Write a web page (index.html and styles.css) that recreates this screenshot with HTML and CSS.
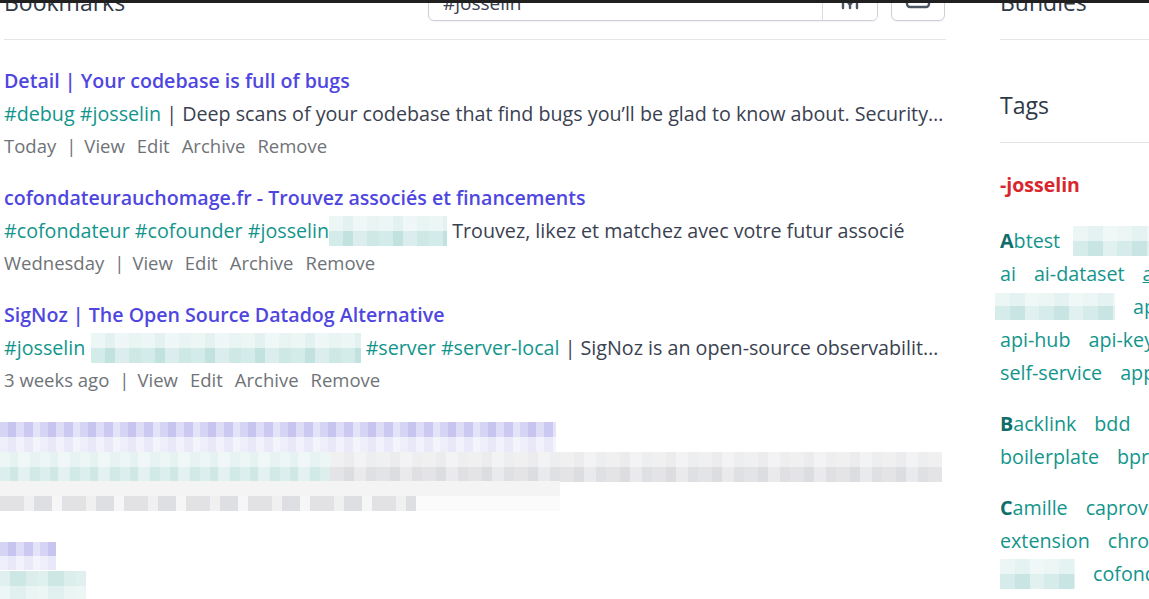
FILE: index.html
```html
<!DOCTYPE html>
<html lang="en">
<head>
<meta charset="utf-8">
<title>Bookmarks</title>
<link rel="stylesheet" href="styles.css">
</head>
<body>
<div class="topbar"></div>
<div class="page">
  <main class="main">
    <header class="section-header">
      <h2>Bookmarks</h2>
      <div class="header-tools">
        <form class="search">
          <input class="search-input" type="text" value="#josselin">
          <button class="search-btn" type="button" aria-label="Search options">
            <svg width="20" height="20" viewBox="0 0 20 20" fill="none" stroke="#4b5563" stroke-width="2.4" stroke-linecap="round" stroke-linejoin="round"><path d="M3 2v14M17 2v14M5 6l5 7l5-7M10 13v3"/></svg>
          </button>
        </form>
        <button class="icon-btn" type="button" aria-label="Bulk edit">
          <svg width="28" height="20" viewBox="0 0 28 20" fill="none" stroke="#4b5563" stroke-width="2.4"><rect x="3" y="-8" width="22" height="13" rx="3"/></svg>
        </button>
      </div>
    </header>

    <ul class="bookmark-list">
      <li class="bookmark">
        <div class="title"><a href="#">Detail | Your codebase is full of bugs</a></div>
        <div class="desc"><span class="tag">#debug</span> <span class="tag">#josselin</span> | Deep scans of your codebase that find bugs you’ll be glad to know about. Security issues, logic errors and edge cases, found before your users do.</div>
        <div class="actions"><span>Today</span><span class="sep">|</span><a href="#">View</a><a href="#">Edit</a><a href="#">Archive</a><a href="#">Remove</a></div>
      </li>
      <li class="bookmark">
        <div class="title"><a href="#">cofondateurauchomage.fr - Trouvez associés et financements</a></div>
        <div class="desc"><span class="tag">#cofondateur</span> <span class="tag">#cofounder</span> <span class="tag">#josselin</span><span class="blur blur-tag w118"></span> Trouvez, likez et matchez avec votre futur associé</div>
        <div class="actions"><span>Wednesday</span><span class="sep">|</span><a href="#">View</a><a href="#">Edit</a><a href="#">Archive</a><a href="#">Remove</a></div>
      </li>
      <li class="bookmark">
        <div class="title"><a href="#">SigNoz | The Open Source Datadog Alternative</a></div>
        <div class="desc"><span class="tag">#josselin</span> <span class="blur blur-tag w270"></span> <span class="tag">#server</span> <span class="tag">#server-local</span> | SigNoz is an open-source observability platform native to OpenTelemetry with logs, traces and metrics.</div>
        <div class="actions"><span>3 weeks ago</span><span class="sep">|</span><a href="#">View</a><a href="#">Edit</a><a href="#">Archive</a><a href="#">Remove</a></div>
      </li>
      <li class="bookmark blurred">
        <div class="title"><span class="blur blur-title w556"></span></div>
        <div class="desc"><span class="blur blur-desc-a"></span><span class="blur blur-desc-b"></span></div>
        <div class="actions"><span class="blur blur-actions"></span></div>
      </li>
      <li class="bookmark blurred">
        <div class="title"><span class="blur blur-title w56"></span></div>
        <div class="desc"><span class="blur blur-tag2"></span></div>
      </li>
    </ul>
  </main>

  <aside class="side">
    <section class="side-section">
      <header class="section-header"><h2>Bundles</h2></header>
    </section>
    <section class="side-section tags-section">
      <header class="section-header"><h2>Tags</h2></header>
      <div class="selected-tags"><a href="#" class="selected-tag">-josselin</a></div>
      <div class="tag-group first">
        <div class="tag-line"><a href="#"><b>A</b>btest</a><span class="blur blur-side w80"></span></div>
        <div class="tag-line"><a href="#">ai</a><a href="#">ai-dataset</a><a href="#" class="hover">analytics</a></div>
        <div class="tag-line"><span class="blur blur-side w120"></span><a href="#">api</a></div>
        <div class="tag-line"><a href="#">api-hub</a><a href="#">api-key</a></div>
        <div class="tag-line"><a href="#">self-service</a><a href="#">app</a></div>
      </div>
      <div class="tag-group">
        <div class="tag-line"><a href="#"><b>B</b>acklink</a><a href="#">bdd</a></div>
        <div class="tag-line"><a href="#">boilerplate</a><a href="#">bpr</a></div>
      </div>
      <div class="tag-group">
        <div class="tag-line"><a href="#"><b>C</b>amille</a><a href="#">caprover</a></div>
        <div class="tag-line"><a href="#">extension</a><a href="#">chrome</a></div>
        <div class="tag-line"><span class="blur blur-side w75"></span><a href="#">cofondateur</a></div>
      </div>
    </section>
  </aside>
</div>
</body>
</html>
```

FILE: styles.css
```css
* { box-sizing: border-box; }

html, body { height: 100%; }

body {
  margin: 0;
  background: #ffffff;
  color: #3a4150;
  font-family: "Open Sans", "Noto Sans", "Liberation Sans", sans-serif;
  font-size: 19.7px;
  overflow: hidden;
}

a { text-decoration: none; color: inherit; }

.topbar {
  position: fixed;
  top: 0;
  left: 0;
  right: 0;
  height: 3px;
  background: #202020;
  z-index: 10;
}

.page {
  display: flex;
  gap: 54px;
  margin-top: -33px;
  padding-left: 4px;
}

.main { width: 942px; flex: none; }
.side { width: 320px; flex: none; }

.section-header {
  height: 73px;
  display: flex;
  align-items: center;
  justify-content: space-between;
  border-bottom: 1px solid #e3e5e9;
}

.section-header h2 {
  margin: 0;
  font-size: 23px;
  font-weight: 500;
  color: #2f3846;
  line-height: 1.2;
}

.header-tools {
  display: flex;
  gap: 13px;
  align-items: center;
  margin-right: 1px;
}

.search {
  display: flex;
  width: 450px;
  height: 36px;
  margin: 0;
  border: 1px solid #cdd0d8;
  border-radius: 6px;
  box-shadow: 0 1px 1px rgba(0, 0, 0, 0.05);
  overflow: hidden;
}

.search-input {
  flex: 1;
  border: 0;
  outline: 0;
  padding: 0 14px;
  font: inherit;
  font-size: 19px;
  color: #3a4150;
  background: transparent;
}

.search-btn {
  width: 55px;
  border: 0;
  border-left: 1px solid #d8dbe1;
  background: #fff;
  display: flex;
  align-items: flex-start;
  justify-content: center;
  padding: 6px 0 0;
}

.icon-btn {
  width: 54px;
  height: 36px;
  border: 1px solid #cdd0d8;
  border-radius: 6px;
  background: #fff;
  box-shadow: 0 1px 1px rgba(0, 0, 0, 0.05);
  display: flex;
  align-items: flex-start;
  justify-content: center;
  padding: 16px 0 0;
}

/* Bookmark list */
.bookmark-list {
  list-style: none;
  margin: 0;
  padding: 24px 0 0;
}

.bookmark { margin-bottom: 19px; }

.bookmark .title {
  line-height: 33px;
  height: 33px;
  white-space: nowrap;
}

.bookmark .title a {
  color: #4f46e0;
  font-weight: 600;
  font-size: 19.6px;
}

.bookmark .desc {
  line-height: 33px;
  height: 33px;
  white-space: nowrap;
  overflow: hidden;
  text-overflow: ellipsis;
  color: #3a4150;
}

.tag { color: #12958c; }

.bookmark .actions {
  line-height: 32px;
  height: 32px;
  font-size: 18.5px;
  color: #6f7378;
  display: flex;
  gap: 12px;
  white-space: nowrap;
}

.bookmark .actions .sep { margin: 0 -4px 0 -2px; }

/* Pixelated (blurred) placeholders */
.blur {
  display: inline-block;
  vertical-align: middle;
  height: 30px;
}

.blur-tag {
  background:
    linear-gradient(to bottom, rgba(255, 255, 255, 0.55) 0 50%, rgba(255, 255, 255, 0) 50%),
    repeating-linear-gradient(90deg, #d3ebe9 0 14px, #c1e2df 14px 24px, #dbeeed 24px 38px, #cde8e5 38px 50px);
  margin-top: -3px;
}

.blur-tag.w118 { width: 118px; }
.blur-tag.w270 { width: 270px; }

.blurred .title, .blurred .desc, .blurred .actions { overflow: visible; }

.blur-title {
  margin-left: -4px;
  background:
    linear-gradient(to bottom, rgba(255, 255, 255, 0) 0 50%, rgba(255, 255, 255, 0.6) 50%),
    repeating-linear-gradient(90deg, #d6d4f4 0 8px, #c7c5ef 8px 16px, #dedcf7 16px 24px, #cbc9f1 24px 33px, #e4e3f8 33px 40px);
}

.blur-title.w556 { width: 556px; margin-top: 6px; }
.blur-title.w56 { width: 56px; height: 28px; margin-top: 10px; }

.blur-desc-a {
  margin-left: -4px;
  width: 330px;
  background:
    linear-gradient(to bottom, rgba(255, 255, 255, 0.45) 0 50%, rgba(255, 255, 255, 0) 50%),
    repeating-linear-gradient(90deg, #dcefed 0 10px, #cfe8e5 10px 18px, #e3f2f1 18px 30px, #d2eae7 30px 40px);
}

.blur-desc-b {
  width: 612px;
  background:
    linear-gradient(to bottom, rgba(255, 255, 255, 0.45) 0 50%, rgba(255, 255, 255, 0) 50%),
    repeating-linear-gradient(90deg, #e4e4e6 0 14px, #dcdde0 14px 24px, #eaeaec 24px 36px, #dfe0e3 36px 46px);
}

.blur-actions {
  margin-left: -4px;
  width: 560px;
  background:
    linear-gradient(to bottom, rgba(0, 0, 0, 0) 0 50%, #fbfbfb 50%) no-repeat 416px 0 / 144px 100%,
    linear-gradient(to bottom, #f4f4f4 0 50%, rgba(0, 0, 0, 0) 50%),
    repeating-linear-gradient(90deg, #e2e2e4 0 24px, #f0f0f1 24px 34px, #dedfe2 34px 52px, #f6f6f6 52px 62px);
}

.blur-tag2 {
  margin-left: -4px;
  width: 86px;
  margin-top: 4px;
  background:
    linear-gradient(to bottom, rgba(255, 255, 255, 0) 0 50%, rgba(255, 255, 255, 0.4) 50%),
    repeating-linear-gradient(90deg, #e0f0ee 0 10px, #cde7e4 10px 26px, #dceeec 26px 38px);
}

/* Side column */
.side-section + .side-section { margin-top: 30px; }

.selected-tags {
  padding-top: 25px;
  line-height: 33px;
}

.selected-tag {
  color: #d9262c;
  font-weight: 700;
  font-size: 19.5px;
}

.tag-group { margin-top: 18px; }
.tag-group.first { margin-top: 23px; }

.tag-line {
  display: flex;
  gap: 18px;
  line-height: 33px;
  height: 33px;
  white-space: nowrap;
  align-items: center;
}

.tag-line a { color: #12958c; }
.tag-line a.hover { text-decoration: underline; }
.tag-line b { color: #0f6e6a; font-weight: 700; }

.blur-side {
  background:
    linear-gradient(to bottom, rgba(255, 255, 255, 0.5) 0 50%, rgba(255, 255, 255, 0) 50%),
    repeating-linear-gradient(90deg, #d6ecea 0 15px, #c9e5e3 15px 30px, #e0f1ef 30px 44px);
}

.blur-side.w80 { width: 80px; margin-left: -5px; }
.blur-side.w120 { width: 120px; margin-left: -5px; height: 27px; }
.blur-side.w75 { width: 75px; }
```
